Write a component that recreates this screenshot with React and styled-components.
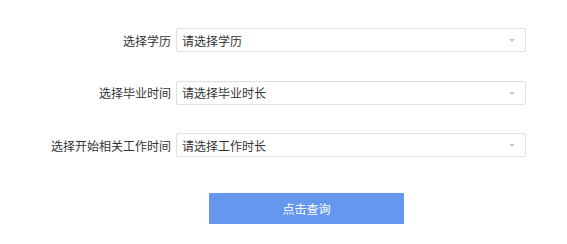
import React from 'react';
import styled, { createGlobalStyle } from 'styled-components';

const GlobalStyle = createGlobalStyle`
    body {
        margin: 0;
        background: #fff;
        font-family: "Microsoft YaHei", "Noto Sans CJK SC", "Liberation Sans", sans-serif;
    }
`;

const Form = styled.div`
    width: 567px;
    padding-top: 28px;
    display: flex;
    flex-direction: column;
    gap: 28.5px;
`;

const Row = styled.div`
    display: flex;
    align-items: center;
    height: 24px;
`;

const Label = styled.label`
    width: 171px;
    text-align: right;
    font-size: 12px;
    color: #333;
    white-space: nowrap;
`;

const Select = styled.div`
    position: relative;
    width: 350px;
    height: 24px;
    box-sizing: border-box;
    border: 1px solid #e0e0e0;
    border-radius: 2px;
    padding: 0 20px 0 5px;
    display: flex;
    align-items: center;
    font-size: 12px;
    color: #333;
    margin-left: 5px;
`;

const Arrow = styled.span`
    position: absolute;
    right: 10px;
    top: 10px;
    width: 0;
    height: 0;
    border-left: 3px solid transparent;
    border-right: 3px solid transparent;
    border-top: 3px solid #c8c8c8;
`;

const Footer = styled.div`
    padding-left: 209px;
    margin-top: 7.5px;
`;

const Button = styled.button`
    width: 195px;
    height: 31px;
    border: none;
    border-radius: 1px;
    background: #6597ef;
    color: #fff;
    font-size: 12px;
    font-family: inherit;
    cursor: pointer;
`;

const fields = [
    { label: '选择学历', placeholder: '请选择学历' },
    { label: '选择毕业时间', placeholder: '请选择毕业时长' },
    { label: '选择开始相关工作时间', placeholder: '请选择工作时长' },
];

const App = () => (
    <>
        <GlobalStyle />
        <Form>
            {fields.map(f => (
                <Row key={f.label}>
                    <Label>{f.label}</Label>
                    <Select>
                        {f.placeholder}
                        <Arrow />
                    </Select>
                </Row>
            ))}
            <Footer>
                <Button>点击查询</Button>
            </Footer>
        </Form>
    </>
);

export default App;
